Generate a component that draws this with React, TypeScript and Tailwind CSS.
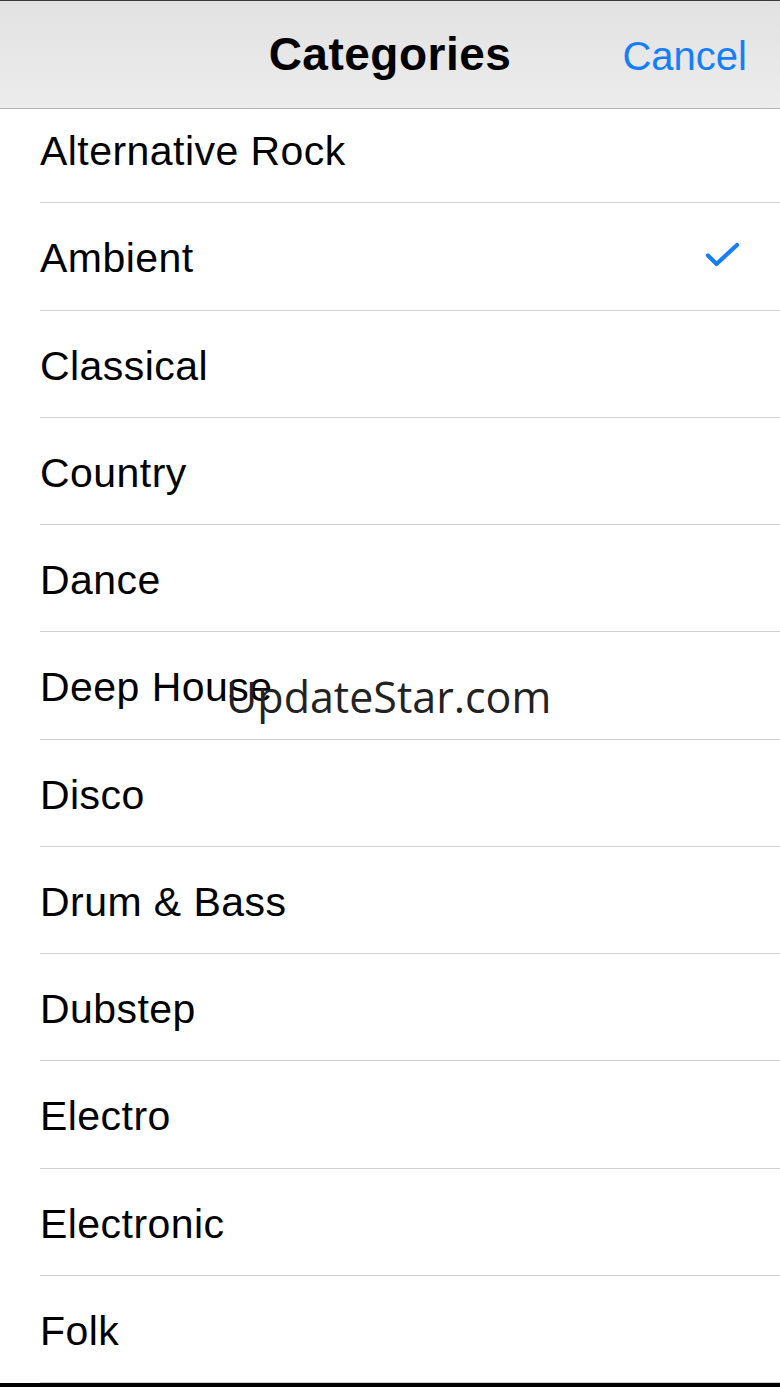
import React from "react";

const categories = [
  "Alternative Rock",
  "Ambient",
  "Classical",
  "Country",
  "Dance",
  "Deep House",
  "Disco",
  "Drum & Bass",
  "Dubstep",
  "Electro",
  "Electronic",
  "Folk",
];

const selected = "Ambient";

function Check() {
  return (
    <svg width="36" height="30" viewBox="0 0 36 30" fill="none">
      <path
        d="M3 14.5 L11.5 23 L32 4"
        stroke="#157efb"
        strokeWidth="4.2"
        strokeLinecap="round"
        strokeLinejoin="round"
      />
    </svg>
  );
}

export default function App() {
  return (
    <div
      className="relative w-[780px] h-[1387px] bg-black overflow-hidden flex flex-col"
      style={{ fontFamily: '"Liberation Sans", Arial, sans-serif' }}
    >
      {/* nav bar */}
      <div className="relative z-10 h-[109px] shrink-0 border-t border-[#3a3a3a] border-b border-b-[#b4b4b4] bg-gradient-to-b from-[#e2e2e2] to-[#ececec] flex items-center justify-center">
        <h1 className="text-[46px] font-bold text-black tracking-[0.5px] leading-none -mt-[1px]">
          Categories
        </h1>
        <button className="absolute right-[33px] top-[35px] text-[40px] leading-none text-[#157efb]">
          Cancel
        </button>
      </div>

      {/* list */}
      <div className="relative h-[1274px] overflow-hidden bg-white">
        <div className="-mt-[13px]">
          {categories.map((name) => (
            <div key={name} className="h-[107.25px] pl-[40px] flex">
              <div className="flex-1 flex items-center justify-between pr-[39px] border-b border-[#d0d0d0]">
                <span className="text-[41px] text-black tracking-[0.45px] leading-none pt-[5px]">
                  {name}
                </span>
                {name === selected && <Check />}
              </div>
            </div>
          ))}
        </div>
        <div
          className="absolute left-[226px] top-[566px] text-[43px] leading-none text-[#222222]"
          style={{ fontFamily: '"Open Sans", "Noto Sans", sans-serif' }}
        >
          UpdateStar.com
        </div>
      </div>
    </div>
  );
}
